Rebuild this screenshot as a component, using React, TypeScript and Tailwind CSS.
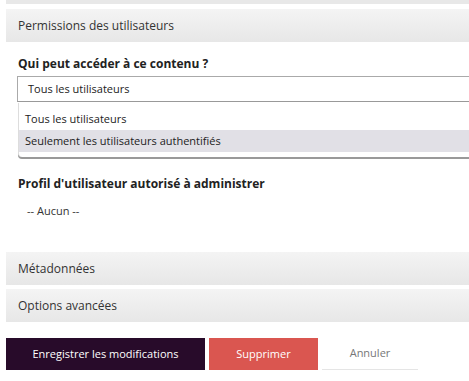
import React from 'react';

const font = { fontFamily: '"Open Sans", "Liberation Sans", sans-serif' };

function PanelHeader({ title }: { title: string }) {
  return (
    <div className="flex h-[33px] items-center bg-gradient-to-b from-[#f4f4f4] to-[#e7e7e7] pl-3 text-[12px] text-[#333]">
      {title}
    </div>
  );
}

export default function App() {
  const options = ['Tous les utilisateurs', 'Seulement les utilisateurs authentifiés'];

  return (
    <div className="h-[381px] w-[469px] overflow-hidden bg-white pl-[6px]" style={font}>
      <div className="h-[4px] bg-[#e8e8e8]" />

      <div className="mt-[5px]">
        <PanelHeader title="Permissions des utilisateurs" />
        <div className="pl-3 pt-[14px]">
          <div className="text-[12px] leading-[16px] font-bold text-[#222]">Qui peut accéder à ce contenu ?</div>
          <div className="relative -mr-[10px] mt-[4px] -ml-px">
            <div className="flex h-[26px] items-center border border-[#aaa] border-b-[#999] pl-[10px] text-[11px] text-[#222]">
              {options[0]}
            </div>
            <div className="ml-px mt-px rounded-bl-[4px] border-l border-[#ddd] bg-white py-[5px] text-[11px] text-[#222] shadow-[0_2px_0_#999]">
              {options.map((o, i) => (
                <div
                  key={o}
                  className={`flex h-[22px] items-center pl-[6px] ${i === 1 ? 'bg-[#e1e0e6]' : ''}`}
                >
                  {o}
                </div>
              ))}
            </div>
          </div>

          <div className="mt-[19px] text-[12px] leading-[16px] font-bold text-[#222]">Profil d'utilisateur autorisé à administrer</div>
          <div className="mt-[11px] pl-[9px] text-[11px] leading-[15px] text-[#333]">-- Aucun --</div>
        </div>
      </div>

      <div className="mt-[34px] flex flex-col gap-[4px]">
        <PanelHeader title="Métadonnées" />
        <PanelHeader title="Options avancées" />
      </div>

      <div className="mt-[16px] flex gap-[4px] text-[11px]">
        <button className="h-[32px] w-[199px] bg-[#280b2a] text-white">Enregistrer les modifications</button>
        <button className="h-[32px] w-[109px] bg-[#da5650] text-white">Supprimer</button>
        <button className="h-[32px] w-[96px] border-b border-[#e5e5e5] text-[#777]">Annuler</button>
      </div>
    </div>
  );
}
